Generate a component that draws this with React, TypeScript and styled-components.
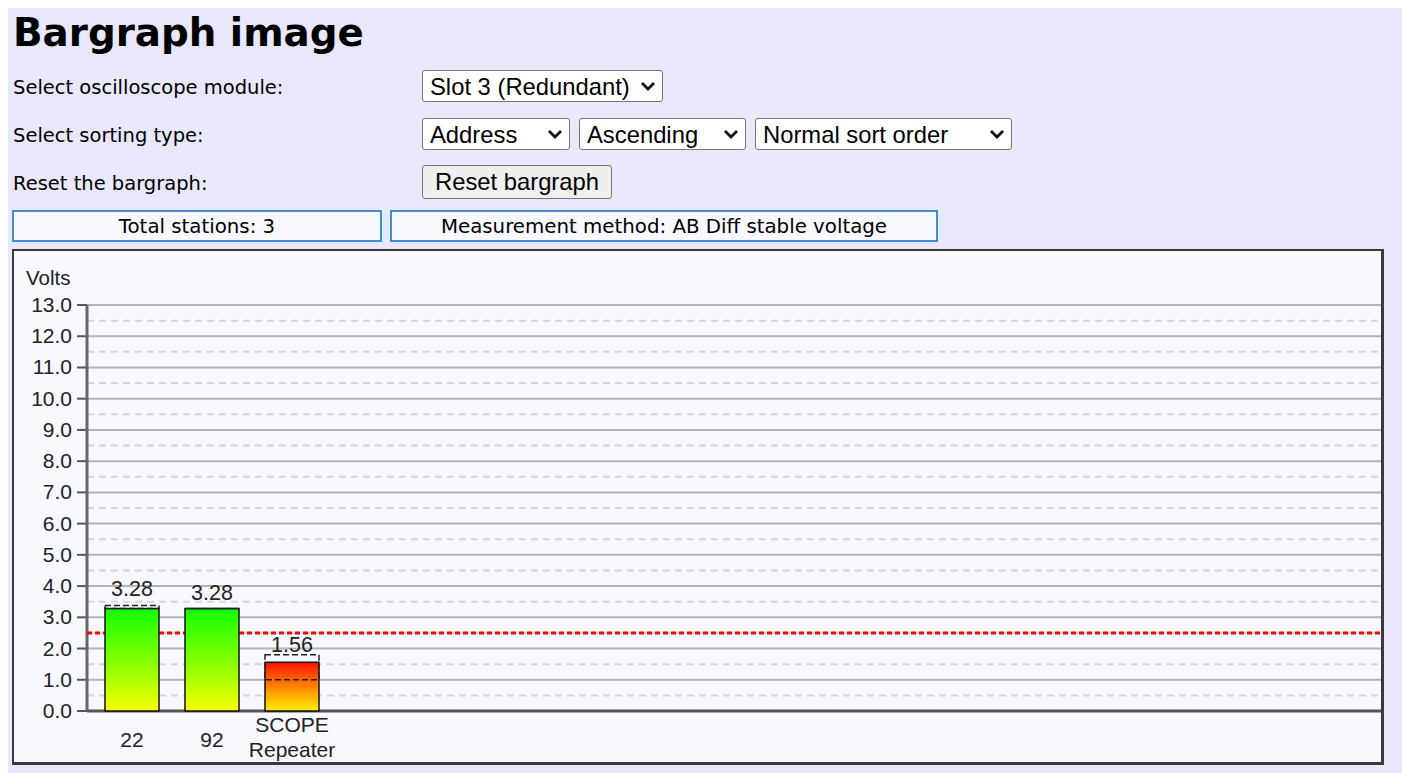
import React from "react";
import styled, { createGlobalStyle } from "styled-components";

const GlobalStyle = createGlobalStyle`
  body {
    margin: 8px 0 0 8px;
    background: #ffffff;
  }
`;

const Page = styled.div`
  min-height: calc(100vh - 8px);
  background: #e8e8fa;
  padding: 2px 0 0 4px;
  box-sizing: border-box;
  font-family: "DejaVu Sans", Verdana, sans-serif;
  color: #000;
`;

const Title = styled.h1`
  margin: 0 0 7px 1px;
  font-size: 38.8px;
  line-height: 45px;
  font-weight: bold;
`;

const FormGrid = styled.div`
  display: grid;
  grid-template-columns: 409px auto;
  grid-auto-rows: 48px;
  align-items: center;
  padding-left: 1px;
`;

const Label = styled.div`
  font-size: 19.5px;
  padding-top: 3px;
`;

const Controls = styled.div`
  display: flex;
  gap: 9px;
  align-items: center;
`;

const SelectWrap = styled.span<{ $w: number }>`
  position: relative;
  display: inline-block;
  width: ${(p) => p.$w}px;
  height: 32px;
`;

const Select = styled.select`
  appearance: none;
  width: 100%;
  height: 100%;
  font-family: "Liberation Sans", Arial, sans-serif;
  font-size: 23.8px;
  color: #000;
  background: #fff;
  border: 1px solid #767676;
  border-radius: 3px;
  padding: 0 28px 0 7px;
`;

const Chevron = styled.svg`
  position: absolute;
  right: 7px;
  top: 11px;
  pointer-events: none;
`;

const Button = styled.button`
  width: 190px;
  height: 34px;
  font-family: "Liberation Sans", Arial, sans-serif;
  font-size: 23.8px;
  color: #000;
  background: #efefef;
  border: 1px solid #767676;
  border-radius: 3px;
  padding: 0 6px;
`;

const InfoRow = styled.div`
  display: flex;
  gap: 8px;
  margin-top: 4px;
`;

const InfoBox = styled.div<{ $w: number }>`
  width: ${(p) => p.$w}px;
  height: 32px;
  box-sizing: border-box;
  border: 2px solid #3f8fd8;
  background: #f8f8ff;
  display: flex;
  align-items: center;
  justify-content: center;
  font-size: 19.8px;
`;

const ChartPanel = styled.div`
  margin-top: 7px;
  width: 1372px;
  height: 516px;
  box-sizing: border-box;
  background: #f8f8ff;
  border: 2px solid #3a3a3a;
  border-right-width: 3px;
  border-bottom-width: 3px;
`;

type Option = { value: string; text: string };

const Dropdown = ({ w, value, options }: { w: number; value: string; options: Option[] }) => (
  <SelectWrap $w={w}>
    <Select defaultValue={value}>
      {options.map((o) => (
        <option key={o.value} value={o.value}>
          {o.text}
        </option>
      ))}
    </Select>
    <Chevron width="16" height="10" viewBox="0 0 16 10">
      <path d="M2 2 L8 8 L14 2" fill="none" stroke="#111" strokeWidth="2.8" />
    </Chevron>
  </SelectWrap>
);

type Station = {
  label: string[];
  value: number;
  max: number;
  min: number;
  ok: boolean;
};

const stations: Station[] = [
  { label: ["22"], value: 3.28, max: 3.38, min: 3.28, ok: true },
  { label: ["92"], value: 3.28, max: 3.28, min: 3.28, ok: true },
  { label: ["SCOPE", "Repeater"], value: 1.56, max: 1.8, min: 1.0, ok: false },
];

const W = 1367;
const AXIS_X = 73;
const ZERO_Y = 460;
const PER_VOLT = 31.23;
const THRESHOLD = 2.5;
const yOf = (v: number) => ZERO_Y - v * PER_VOLT;
const font = '"Liberation Sans", Arial, sans-serif';

const BarChart = () => {
  const volts = Array.from({ length: 14 }, (_, i) => i);
  return (
    <svg width={W} height={511} style={{ display: "block" }}>
      <defs>
        <linearGradient id="okFill" x1="0" y1="0" x2="0" y2="1">
          <stop offset="0" stopColor="#10ff00" />
          <stop offset="1" stopColor="#f4ff00" />
        </linearGradient>
        <linearGradient id="lowFill" x1="0" y1="0" x2="0" y2="1">
          <stop offset="0" stopColor="#ff1000" />
          <stop offset="0.55" stopColor="#ff9000" />
          <stop offset="1" stopColor="#ffee00" />
        </linearGradient>
      </defs>

      <text x={12} y={34} fontFamily={font} fontSize={20.5} fill="#222">
        Volts
      </text>

      {/* half-volt dashed lines */}
      {volts.slice(0, 13).map((v) => (
        <line
          key={`h${v}`}
          x1={AXIS_X}
          x2={W}
          y1={yOf(v + 0.5)}
          y2={yOf(v + 0.5)}
          stroke="#d6d6d6"
          strokeWidth={2}
          strokeDasharray="7 5"
        />
      ))}

      {/* whole-volt lines, ticks and labels */}
      {volts.map((v) => (
        <g key={v}>
          <line
            x1={AXIS_X}
            x2={W}
            y1={yOf(v)}
            y2={yOf(v)}
            stroke={v === 0 ? "#555" : "#b4b4b4"}
            strokeWidth={v === 0 ? 3 : 2}
          />
          <line x1={AXIS_X - 10} x2={AXIS_X} y1={yOf(v)} y2={yOf(v)} stroke="#555" strokeWidth={2} />
          <text
            x={AXIS_X - 15}
            y={yOf(v) + 7}
            textAnchor="end"
            fontFamily={font}
            fontSize={21}
            fill="#222"
          >
            {v.toFixed(1)}
          </text>
        </g>
      ))}

      <line x1={AXIS_X} x2={AXIS_X} y1={yOf(13)} y2={ZERO_Y} stroke="#666" strokeWidth={3} />

      <line
        x1={AXIS_X}
        x2={W}
        y1={yOf(THRESHOLD)}
        y2={yOf(THRESHOLD)}
        stroke="#ff0000"
        strokeWidth={3}
        strokeDasharray="5 3"
      />

      {stations.map((s, i) => {
        const x = 91 + i * 80;
        const cx = x + 27;
        const top = yOf(s.value);
        return (
          <g key={s.label.join(" ")}>
            <rect
              x={x}
              y={top}
              width={54}
              height={ZERO_Y - top}
              fill={s.ok ? "url(#okFill)" : "url(#lowFill)"}
              stroke="#111"
              strokeWidth={1.5}
            />
            <rect
              x={x}
              y={yOf(s.max)}
              width={54}
              height={Math.max(yOf(s.min) - yOf(s.max), 0.01)}
              fill="none"
              stroke="#222"
              strokeWidth={1.5}
              strokeDasharray="6 3"
            />
            <text
              x={cx}
              y={Math.min(top, yOf(s.max)) - (s.ok ? 9 : 3)}
              textAnchor="middle"
              fontFamily={font}
              fontSize={21.5}
              fill="#222"
            >
              {s.value.toFixed(2)}
            </text>
            {s.label.length === 1 ? (
              <text x={cx} y={496} textAnchor="middle" fontFamily={font} fontSize={21} fill="#222">
                {s.label[0]}
              </text>
            ) : (
              s.label.map((l, j) => (
                <text
                  key={l}
                  x={cx}
                  y={481 + j * 25}
                  textAnchor="middle"
                  fontFamily={font}
                  fontSize={21}
                  fill="#222"
                >
                  {l}
                </text>
              ))
            )}
          </g>
        );
      })}
    </svg>
  );
};

const App = () => {
  return (
    <>
      <GlobalStyle />
      <Page>
        <Title>Bargraph image</Title>
        <FormGrid>
          <Label>Select oscilloscope module:</Label>
          <Controls>
            <Dropdown
              w={241}
              value="3"
              options={[
                { value: "1", text: "Slot 1" },
                { value: "2", text: "Slot 2" },
                { value: "3", text: "Slot 3 (Redundant)" },
              ]}
            />
          </Controls>
          <Label>Select sorting type:</Label>
          <Controls>
            <Dropdown
              w={148}
              value="address"
              options={[
                { value: "address", text: "Address" },
                { value: "name", text: "Name" },
                { value: "value", text: "Value" },
              ]}
            />
            <Dropdown
              w={167}
              value="asc"
              options={[
                { value: "asc", text: "Ascending" },
                { value: "desc", text: "Descending" },
              ]}
            />
            <Dropdown
              w={257}
              value="normal"
              options={[
                { value: "normal", text: "Normal sort order" },
                { value: "problems", text: "Problems first" },
              ]}
            />
          </Controls>
          <Label>Reset the bargraph:</Label>
          <Controls>
            <Button>Reset bargraph</Button>
          </Controls>
        </FormGrid>
        <InfoRow>
          <InfoBox $w={370}>Total stations: 3</InfoBox>
          <InfoBox $w={548}>Measurement method: AB Diff stable voltage</InfoBox>
        </InfoRow>
        <ChartPanel>
          <BarChart />
        </ChartPanel>
      </Page>
    </>
  );
};

export default App;
